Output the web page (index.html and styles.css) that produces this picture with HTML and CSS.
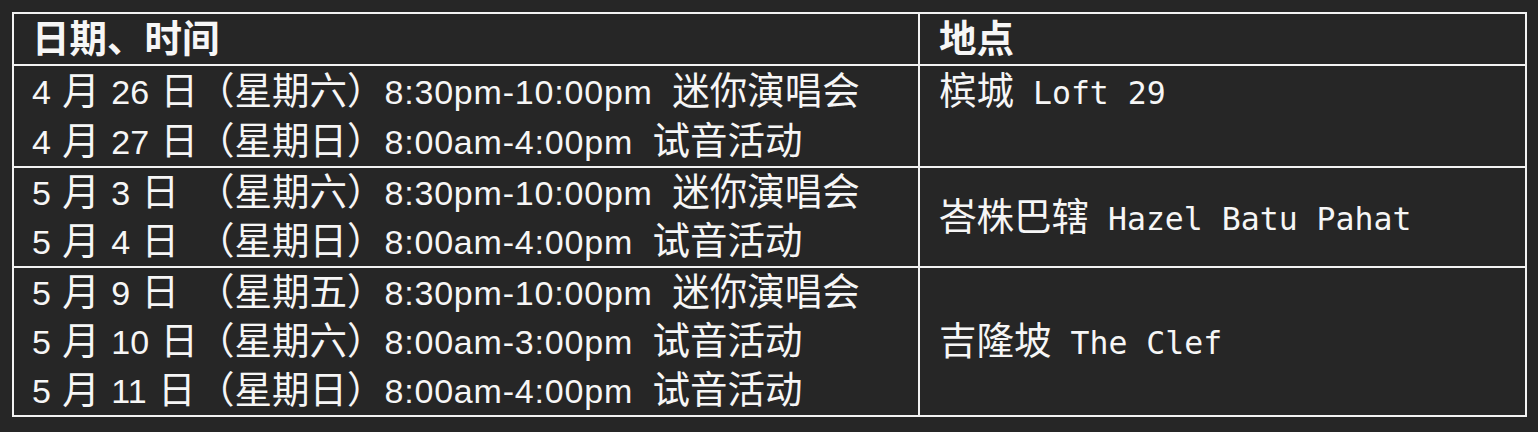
FILE: index.html
```html
<!DOCTYPE html>
<html lang="zh-CN">
<head>
<meta charset="utf-8">
<title>日程</title>
<link rel="stylesheet" href="styles.css">
</head>
<body>
<div class="page">
  <table class="schedule">
    <thead>
      <tr class="head">
        <th class="h-date">日期、时间</th>
        <th class="h-place">地点</th>
      </tr>
    </thead>
    <tbody>
      <tr class="row-a">
        <td class="date">
          <div class="ln"><span class="md"><span class="n">4</span> 月 <span class="n">26</span> 日</span>（星期六）<span class="tm">8:30pm-10:00pm</span> 迷你演唱会</div>
          <div class="ln"><span class="md"><span class="n">4</span> 月 <span class="n">27</span> 日</span>（星期日）<span class="tm">8:00am-4:00pm</span> 试音活动</div>
        </td>
        <td class="place top"><span class="zh">槟城</span><span class="en"> Loft 29</span></td>
      </tr>
      <tr class="row-b">
        <td class="date">
          <div class="ln"><span class="md"><span class="n">5</span> 月 <span class="n">3</span> 日</span>（星期六）<span class="tm">8:30pm-10:00pm</span> 迷你演唱会</div>
          <div class="ln"><span class="md"><span class="n">5</span> 月 <span class="n">4</span> 日</span>（星期日）<span class="tm">8:00am-4:00pm</span> 试音活动</div>
        </td>
        <td class="place"><span class="zh">峇株巴辖</span><span class="en"> Hazel Batu Pahat</span></td>
      </tr>
      <tr class="row-b">
        <td class="date">
          <div class="ln"><span class="md"><span class="n">5</span> 月 <span class="n">9</span> 日</span>（星期五）<span class="tm">8:30pm-10:00pm</span> 迷你演唱会</div>
          <div class="ln"><span class="md"><span class="n">5</span> 月 <span class="n">10</span> 日</span>（星期六）<span class="tm">8:00am-3:00pm</span> 试音活动</div>
          <div class="ln"><span class="md"><span class="n">5</span> 月 <span class="n">11</span> 日</span>（星期日）<span class="tm">8:00am-4:00pm</span> 试音活动</div>
        </td>
        <td class="place"><span class="zh">吉隆坡</span><span class="en"> The Clef</span></td>
      </tr>
    </tbody>
  </table>
</div>
</body>
</html>
```
FILE: styles.css
```css
* {
  box-sizing: border-box;
}

body {
  margin: 0;
  background: #262626;
  color: #f6f6f6;
  font-family: "Liberation Sans", "Noto Sans CJK SC", sans-serif;
  font-size: 37.5px;
}

.page {
  padding: 12px;
}

.schedule {
  width: 1515px;
  table-layout: fixed;
  border-collapse: separate;
  border-spacing: 0;
  border-top: 2px solid #f2f2f2;
  border-left: 2px solid #f2f2f2;
}

.schedule th,
.schedule td {
  padding: 0 0 0 18px;
  border-right: 2px solid #f2f2f2;
  border-bottom: 2px solid #f2f2f2;
  text-align: left;
  vertical-align: top;
  white-space: nowrap;
}

.schedule th {
  font-weight: 700;
  line-height: 50px;
}

.h-date {
  width: 906px;
}

.schedule .h-place,
.schedule .place {
  padding-left: 19px;
}

.row-a .ln,
.row-a .place {
  line-height: 50px;
}

.row-b .ln,
.row-b .place {
  line-height: 49px;
}

.schedule .place {
  vertical-align: middle;
}

.schedule .place.top {
  vertical-align: top;
}

.md {
  display: inline-block;
  width: 165px;
  word-spacing: 1px;
  white-space: nowrap;
}

.n {
  font-size: 34px;
  line-height: 1;
}

.tm {
  font-size: 34px;
  line-height: 1;
  letter-spacing: 0.8px;
  margin-right: 9px;
}

.en {
  font-family: "DejaVu Sans Mono", monospace;
  font-size: 31.5px;
  line-height: 1;
  white-space: pre;
}
```
